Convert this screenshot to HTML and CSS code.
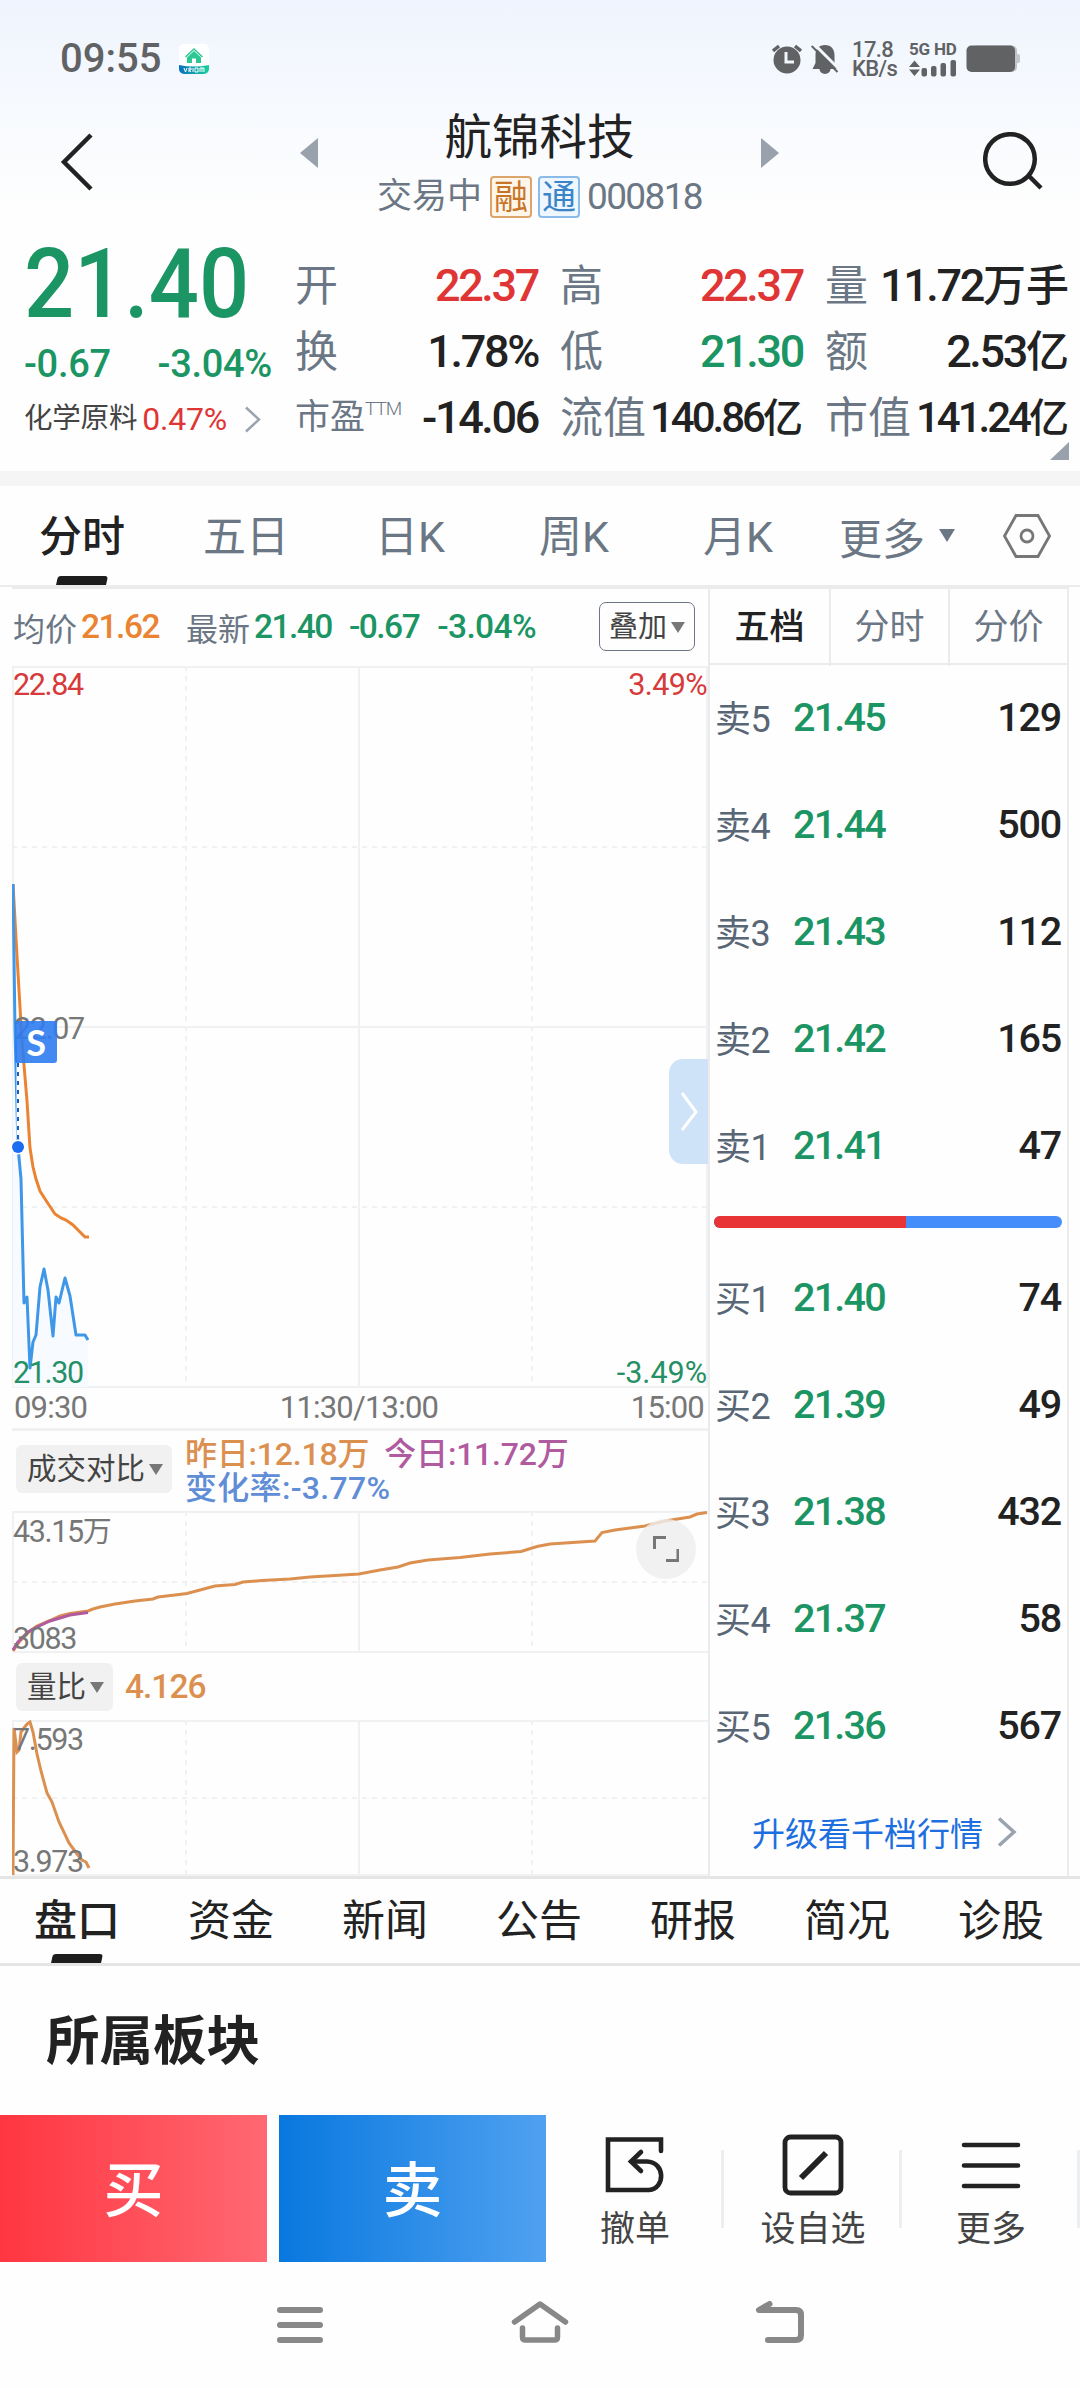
FILE: index.html
```html
<!DOCTYPE html>
<html lang="zh-CN">
<head>
<meta charset="utf-8">
<title>航锦科技 000818</title>
<link rel="stylesheet" href="styles.css">
</head>
<body>
<div class="app">
  <header class="head">
    <div class="status">
      <span class="clock">09:55</span>
      <svg class="appicon" width="30" height="30" viewBox="0 0 30 30">
        <defs><linearGradient id="ag" x1="0" x2="1"><stop offset="0" stop-color="#0a6fc0"/><stop offset="1" stop-color="#15d39a"/></linearGradient></defs>
        <rect width="30" height="30" rx="5" fill="#fff"/>
        <path d="M0 21Q15 24 30 21V25a5 5 0 0 1-5 5H5a5 5 0 0 1-5-5z" fill="url(#ag)"/>
        <path d="M6.500 13L15 5l8.500 8" fill="none" stroke="#2bc795" stroke-width="1.500"/>
        <path d="M15 7l7 6.500V19h-5v-4.500h-4V19H8v-5.500z" fill="#2bc795"/>
        <path d="M5 24l1.500 4L8 24M10 28v-4h2v2h-2l2 2M14 24v4M16 24h3v4h-3zM21 28v-4h4v4M23 24v4" fill="none" stroke="#fff" stroke-width="1"/>
      </svg>
      <span class="grow"></span>
      <svg class="alarm" width="30" height="30" viewBox="0 0 30 30"><circle cx="15" cy="16" r="13.500" fill="#616264"/><path d="M1 7l6-5M29 7l-6-5" stroke="#616264" stroke-width="3.500"/><path d="M14 8v10h8" fill="none" stroke="#f2f6fd" stroke-width="3"/></svg>
      <svg class="bell" width="28" height="31" viewBox="0 0 28 31"><path d="M14 1C8 1 4.500 5 4.500 11v8L1.500 25h7a5.500 5 0 0 0 11 0h6l-2-5V11C23.500 5 20 1 14 1z" fill="#616264"/><path d="M2.500-.5L29.500 26.500" stroke="#f3f7fe" stroke-width="3"/><path d="M.7 2L26.500 28" stroke="#616264" stroke-width="2"/></svg>
      <div class="speed"><span>17.8</span><span>KB/s</span></div>
      <div class="net">
        <span>5G HD</span>
        <svg width="48" height="17" viewBox="0 0 48 17" fill="#616264"><path d="M0 7L5.500.5L11 7zM0 9.500h11L5.500 16z"/><rect x="12.500" y="8" width="5.500" height="8.500" rx="2"/><rect x="22" y="6" width="5.500" height="10.500" rx="2"/><rect x="31.500" y="3" width="5.500" height="13.500" rx="2"/><rect x="41.500" y="0" width="5.500" height="16.500" rx="2"/></svg>
      </div>
      <svg class="batt" width="54" height="28" viewBox="0 0 54 28"><rect x="6" y=".5" width="45" height="26.500" rx="5" fill="#bfc1c6"/><rect x="49" y="9" width="5" height="9" rx="2" fill="#c3c5ca"/><rect x=".5" y=".5" width="48.500" height="26.500" rx="5" fill="#616264"/></svg>
    </div>
    <div class="titlebar">
      <svg class="back" width="34" height="58" viewBox="0 0 34 58"><path d="M31 2L4 29l27 27" fill="none" stroke="#222" stroke-width="4.500"/></svg>
      <svg class="tri" width="18" height="30" viewBox="0 0 18 30"><path d="M18 0v30L0 15z" fill="#98a1ac"/></svg>
      <div class="title">
        <div class="name">航锦科技</div>
        <div class="sub"><span>交易中</span><i class="tag rong">融</i><i class="tag tong">通</i><span class="code n">000818</span></div>
      </div>
      <svg class="tri" width="18" height="30" viewBox="0 0 18 30"><path d="M0 0v30l18-15z" fill="#98a1ac"/></svg>
      <svg class="search" width="60" height="60" viewBox="0 0 60 60"><circle cx="27" cy="27" r="24.800" fill="none" stroke="#222" stroke-width="4.500"/><path d="M45 43l13 13" stroke="#222" stroke-width="4.500"/></svg>
    </div>
  </header>

  <section class="quote">
    <div class="now">
      <div class="price">21.40</div>
      <div class="chg"><span>-0.67</span><span>-3.04%</span></div>
      <div class="ind"><span class="indname">化学原料</span><span class="up">0.47%</span><svg width="18" height="27" viewBox="0 0 18 27"><path d="M2 1.500L15 13.500L2 25.500" fill="none" stroke="#9aa3ae" stroke-width="2.500"/></svg></div>
    </div>
    <div class="stats">
      <div class="st"><span>开</span><b class="up n">22.37</b></div>
      <div class="st"><span>高</span><b class="up n">22.37</b></div>
      <div class="st"><span>量</span><b class="n">11.72<em>万手</em></b></div>
      <div class="st"><span>换</span><b class="n">1.78%</b></div>
      <div class="st"><span>低</span><b class="down n">21.30</b></div>
      <div class="st"><span>额</span><b class="n">2.53<em>亿</em></b></div>
      <div class="st"><span class="pe">市盈<sup>TTM</sup></span><b class="n">-14.06</b></div>
      <div class="st"><span>流值</span><b class="n tight">140.86<em>亿</em></b></div>
      <div class="st"><span>市值</span><b class="n tight">141.24<em>亿</em></b></div>
    </div>
    <i class="corner"></i>
  </section>

  <nav class="periods">
    <span class="p on">分时<i class="bar"></i></span><span class="p">五日</span><span class="p">日K</span><span class="p">周K</span><span class="p">月K</span>
    <span class="more">更多<i class="caret big"></i></span>
    <svg class="hex" width="48" height="44" viewBox="0 0 48 44" fill="none" stroke="#777" stroke-width="2.800"><path d="M13 1.500h22L46.500 22L35 42.500H13L1.500 22z"/><circle cx="24" cy="22" r="6"/></svg>
  </nav>

  <main class="board">
    <div class="charts">
      <div class="info">
        <span class="lab">均价</span><span class="n avg">21.62</span>
        <span class="lab new">最新</span><span class="n dn">21.40</span><span class="n dn i2">-0.67</span><span class="n dn i3">-3.04%</span>
        <button class="overlay">叠加<i class="caret"></i></button>
      </div>
      <div class="plot main">
        <svg width="696" height="722" viewBox="0 0 696 722">
          <g fill="none" stroke="#f0f1f2" stroke-width="2"><path d="M0 1h696M0 361h696M0 721h696M1 0v722M347 0v722M695 0v722"/><path d="M0 181h696M0 541h696" stroke-dasharray="5 5"/><path d="M174 0v722M520 0v722" stroke-dasharray="5 5"/></g>
          <path d="M1 218L3 364L6 481L9 513L12 637L15 631L18 702L21 676L24 669L28 621L32 603L36 624L41 670L44 631L47 637L53 612L58 630L64 669H73L76 674V721H1z" fill="#f7faff"/>
          <path d="M1 218L5 290L10 375L15 435L18 482L21 501L24 513L28 525L35 536L43 548L49 552L54 554L61 559L66 564L73 571H77" fill="none" stroke="#ea8432" stroke-width="3"/>
          <path d="M1 218L3 364L6 481L9 513L12 637L15 631L18 702L21 676L24 669L28 621L32 603L36 624L41 670L44 631L47 637L53 612L58 630L64 669H73L76 674" fill="none" stroke="#3f97e8" stroke-width="3" stroke-linejoin="round"/>
          <path d="M6 397v76" stroke="#fff" stroke-width="3"/><path d="M6 397v76" stroke="#1a5fb8" stroke-width="2" stroke-dasharray="4 5"/>
          <circle cx="6" cy="481" r="7.500" fill="#fff"/><circle cx="6" cy="481" r="6" fill="#1a6cf0"/>
        </svg>
        <span class="t tl red n">22.84</span><span class="t tr red">3.49%</span>
        <span class="t ml n">22.07</span><span class="t bl grn n">21.30</span><span class="t br grn">-3.49%</span>
        <span class="sell">S</span>
        <span class="handle"><svg width="20" height="40" viewBox="0 0 20 40"><path d="M2 1l14 19L2 38" fill="none" stroke="#fff" stroke-width="3"/></svg></span>
      </div>
      <div class="axis n"><span>09:30</span><span>11:30/13:00</span><span>15:00</span></div>
      <div class="cmp">
        <button class="pill">成交对比<i class="caret"></i></button>
        <div class="cmptext"><span class="c1">昨日:12.18万</span><span class="c2">今日:11.72万</span><br><span class="c3">变化率:-3.77%</span></div>
      </div>
      <div class="plot vol">
        <svg width="696" height="142" viewBox="0 0 696 142">
          <g fill="none" stroke="#f0f1f2" stroke-width="2"><path d="M0 1h696M0 141h696M1 0v142M347 0v142"/><path d="M0 71h696M174 0v142M520 0v142" stroke-dasharray="5 5"/></g>
          <path d="M1 140L8 130L18 120L25 115L38 109.500L48 105L58 102.500L76 100L81 98L88 96L103 93L123 90L141 88L146 86L163 84L175 82.500L188 79L203 75L223 73.500L231 71L250 69.500L278 68L298 66L323 64.500L347 63L368 59L386 56L398 52L416 49L448 46.500L478 43L509 40.500L525 35.500L538 33L583 30L590 21.500L603 19L633 15L653 10L678 6L685 3L695 1.500" fill="none" stroke="#dc9050" stroke-width="3"/>
          <path d="M1 139L6 131L16 121L25 116L38 110L58 104L76 101.500" fill="none" stroke="#b05aa0" stroke-width="3"/>
        </svg>
        <span class="t v1 n">43.15<em>万</em></span><span class="t v2 n">3083</span>
        <span class="expand"><svg width="26" height="26" viewBox="0 0 26 26"><path d="M1.500 13V1.500H13M25 13v11.500H13" fill="none" stroke="#777" stroke-width="3"/></svg></span>
      </div>
      <div class="ratio"><button class="pill">量比<i class="caret"></i></button><span class="n rv">4.126</span></div>
      <div class="plot lb">
        <svg width="696" height="156" viewBox="0 0 696 156">
          <g fill="none" stroke="#f0f1f2" stroke-width="2"><path d="M0 1h696M0 155h696M1 0v156M347 0v156"/><path d="M0 78h696M174 0v156M520 0v156" stroke-dasharray="5 5"/></g>
          <path d="M1 155L2 8L5 32L7 30L9 12L12 8L15 4L18 2L21 12L25 34L29 51L35 73L40 82L47 102L57 123L65 134L70 140L74 142L77 148" fill="none" stroke="#dc9050" stroke-width="3"/>
        </svg>
        <span class="t r1 n">7.593</span><span class="t r2 n">3.973</span>
      </div>
    </div>

    <aside class="book">
      <div class="btabs"><span class="on">五档</span><span>分时</span><span>分价</span></div>
      <div class="row"><span>卖5</span><b class="n">21.45</b><b class="q">129</b></div>
      <div class="row"><span>卖4</span><b class="n">21.44</b><b class="q">500</b></div>
      <div class="row"><span>卖3</span><b class="n">21.43</b><b class="q">112</b></div>
      <div class="row"><span>卖2</span><b class="n">21.42</b><b class="q">165</b></div>
      <div class="row"><span>卖1</span><b class="n">21.41</b><b class="q">47</b></div>
      <div class="balance"><i style="width:55.2%"></i></div>
      <div class="row"><span>买1</span><b class="n">21.40</b><b class="q">74</b></div>
      <div class="row"><span>买2</span><b class="n">21.39</b><b class="q">49</b></div>
      <div class="row"><span>买3</span><b class="n">21.38</b><b class="q">432</b></div>
      <div class="row"><span>买4</span><b class="n">21.37</b><b class="q">58</b></div>
      <div class="row"><span>买5</span><b class="n">21.36</b><b class="q">567</b></div>
      <div class="link">升级看千档行情<svg width="20" height="30" viewBox="0 0 20 30"><path d="M2 1.500L17 15L2 28.500" fill="none" stroke="#9aa3ae" stroke-width="3.500"/></svg></div>
    </aside>
  </main>

  <nav class="sections"><span class="on">盘口<i class="bar"></i></span><span>资金</span><span>新闻</span><span>公告</span><span>研报</span><span>简况</span><span>诊股</span></nav>
  <h2 class="block">所属板块</h2>

  <footer class="actions">
    <button class="trade buy">买</button>
    <button class="trade sellbtn">卖</button>
    <div class="act"><svg width="62" height="62" viewBox="0 0 62 62" fill="none" stroke="#222" stroke-width="4.600"><path d="M57 17V5.500H4V56H45C62 54 61 28 43 27.500H28" stroke-linecap="round"/><path d="M37 18L27 27.500L37 37" stroke-linecap="round"/></svg><span>撤单</span></div>
    <div class="act"><svg width="62" height="62" viewBox="0 0 62 62" fill="none" stroke="#222"><rect x="3" y="3" width="56" height="56" rx="5.500" stroke-width="4.800"/><path d="M19 44L44 19" stroke-width="6"/></svg><span>设自选</span></div>
    <div class="act"><svg width="62" height="62" viewBox="0 0 62 62" fill="none" stroke="#222" stroke-width="4.600" stroke-linecap="round"><path d="M4 11h54M4 31.500h54M4 52h54"/></svg><span>更多</span></div>
  </footer>
  <div class="sysnav">
    <svg width="60" height="46" viewBox="0 0 60 46"><path d="M10 10h40M10 25h40M10 40h40" stroke="#888" stroke-width="6" stroke-linecap="round"/></svg>
    <svg width="60" height="46" viewBox="0 0 60 46" fill="none" stroke="#888" stroke-width="5.500" stroke-linecap="round" stroke-linejoin="round"><path d="M4.500 22L30 4L55.500 22M12.500 28v9q0 3 3 3h29q3 0 3-3v-9"/></svg>
    <svg width="60" height="46" viewBox="0 0 60 46" fill="none" stroke="#888" stroke-width="6" stroke-linecap="round" stroke-linejoin="round"><path d="M19.500 4L9 10H46q5 0 5 5v20q0 5-5 5H18"/></svg>
  </div>
</div>
</body>
</html>
```
FILE: styles.css
```css
* { box-sizing: border-box; }
body { margin: 0; background: #fff; }
i, em { font-style: normal; }
b { font-weight: 500; }
svg { display: block; flex: none; }
button { border: 0; margin: 0; padding: 0; background: none; font: inherit; color: inherit; }
.app {
  width: 1080px; height: 2388px; overflow: hidden;
  display: flex; flex-direction: column;
  font-family: Roboto, "Noto Sans CJK SC", sans-serif; color: #222; background: #fefefe;
}
.n { letter-spacing: -.045em; }
.n em { letter-spacing: 0; }
.up { color: #e03535; }
.down { color: #1a9563; }
.grow { flex: 1; }

/* status bar and title */
.head { height: 235px; background: linear-gradient(#eff5fe, #fefefe 210px); }
.status { height: 118px; display: flex; align-items: center; padding: 0 60px 0 60px; color: #616264; }
.clock { font-size: 40px; font-weight: 500; line-height: 40px; width: 119px; }
.alarm { margin-right: 9px; }
.bell { margin-right: 13px; }
.speed { width: 57px; display: flex; flex-direction: column; font-size: 22px; line-height: 19.500px; font-weight: 500; letter-spacing: -.6px; }
.net { width: 57px; display: flex; flex-direction: column; gap: 3px; font-size: 17px; line-height: 15px; font-weight: 700; letter-spacing: -.2px; white-space: nowrap; }
.titlebar { display: flex; align-items: flex-start; padding: 0 37px 0 60px; }
.back { margin-top: 15px; }
.tri { margin-top: 20px; }
.back + .tri { margin-left: 206px; }
.title { width: 444px; display: flex; flex-direction: column; align-items: center; }
.name { font-size: 47.500px; line-height: 48px; margin-top: -4px; }
.sub { display: flex; align-items: center; height: 44px; margin-top: 13px; font-size: 35px; line-height: 42px; color: #6b7785; }
.tag { width: 42px; height: 42px; border: 2px solid; border-radius: 4px; font-size: 34px; line-height: 38px; text-align: center; margin-left: 6px; }
.rong { color: #c8752a; border-color: #dda46c; background: #fff6ea; margin-left: 8px; }
.tong { color: #3c84c8; border-color: #8bbbe8; background: #eef6ff; }
.code { font-size: 37px; margin-left: 7px; }
.search { margin: 14px 0 0 204px; }

/* quote */
.quote { height: 251px; display: flex; position: relative; border-bottom: 15px solid #f5f5f5; }
.now { width: 295px; padding-left: 24px; color: #1a9563; }
.price { font-size: 97px; font-weight: 500; line-height: 98px; transform: scaleX(.91); transform-origin: left; }
.chg { display: flex; justify-content: space-between; width: 248px; font-size: 38px; line-height: 40px; font-weight: 500; margin-top: 11px; letter-spacing: -.3px; }
.ind { display: flex; align-items: center; margin-top: 16px; font-size: 32px; line-height: 38px; letter-spacing: -.2px; }
.indname { font-size: 28.500px; color: #444; margin-right: 5px; }
.ind svg { margin-left: 17px; }
.stats { display: grid; grid-template-columns: 243px 243px 244px; column-gap: 22px; grid-auto-rows: 66px; padding-top: 18px; }
.st { display: flex; justify-content: space-between; line-height: 66px; font-size: 43px; color: #6b7785; white-space: nowrap; }
.st b { font-size: 45px; color: #222; letter-spacing: -.052em; }
.st b em { font-size: 43px; letter-spacing: 0; }
.st .tight { font-size: 42px; letter-spacing: -3px; }
.st .tight em { font-size: 40px; }
.st .up { color: #e03535; }
.st .down { color: #1a9563; }
.st .pe { font-size: 35px; }
.pe sup { font-size: 19px; font-weight: 300; vertical-align: 14px; line-height: 0; letter-spacing: -1px; }
.corner { position: absolute; right: 11px; bottom: 11px; border-bottom: 18px solid #98a1ac; border-left: 19px solid transparent; }

/* period tabs */
.periods { height: 101px; display: flex; align-items: center; border-bottom: 2px solid #ebebeb; font-size: 43px; color: #6b7785; }
.p { width: 164px; height: 99px; line-height: 103px; text-align: center; position: relative; }
.on { color: #222; font-weight: 500; }
.bar { position: absolute; left: 50%; bottom: 0; width: 50px; height: 9px; margin-left: -25px; background: #1d1d1d; border-radius: 3px 3px 0 0; transform: skewX(-12deg); }
.more { display: flex; align-items: center; margin-left: 19px; width: 164px; }
.caret { display: inline-block; border: 7px solid transparent; border-top: 11px solid #777; border-bottom: 0; margin-left: 4px; vertical-align: 4px; }
.caret.big { border-width: 13px 8px 0; border-top-color: #6b7785; margin-left: 14px; }

/* charts */
.board { display: flex; padding: 0 11px 0 12px; height: 1289px; }
.charts { width: 696px; }
.info { height: 79px; display: flex; align-items: center; padding: 0 0 2px 1px; font-size: 33.500px; border-top: 2px solid #ebebeb; white-space: nowrap; }
.info .n { font-weight: 500; }
.lab { font-size: 32px; color: #6b7785; margin-right: 4px; }
.new { margin-left: 27px; }
.avg { color: #ea8432; }
.dn { color: #1a9563; }
.i2 { margin-left: 17px; }
.info .i3 { margin-left: 18px; letter-spacing: -.6px; }
.overlay { margin-left: auto; margin-right: 13px; width: 96px; height: 49px; border: 1.500px solid #6b7785; border-radius: 7px; font-size: 29px; line-height: 40px; color: #444; }
.plot { position: relative; }
.t { position: absolute; font-size: 30.500px; line-height: 32px; color: #777; }
.red { color: #d63a3a; }
.grn { color: #259066; }
.tl { left: 1px; top: 3px; } .tr { right: 1px; top: 3px; letter-spacing: -.6px; }
.ml { left: 2px; top: 347px; } .bl { left: 1px; bottom: -1px; } .br { right: 1px; bottom: -1px; }
.sell { position: absolute; left: 3px; top: 355px; width: 42px; height: 42px; border-radius: 3px; background: rgba(47, 124, 241, .9); color: #fff; font: 700 36px/42px Lato, sans-serif; text-align: center; }
.handle { position: absolute; right: 0; top: 393px; width: 39px; height: 105px; background: #cfe3f8; border-radius: 14px 0 0 14px; padding: 33px 0 0 11px; }
.axis { height: 43px; display: flex; justify-content: space-between; padding: 0 4px 0 2px; font-size: 31px; line-height: 39px; color: #777; border-bottom: 3px solid #f0f1f2; }
.n.axis { letter-spacing: -.8px; }
.cmp { height: 80px; display: flex; padding: 14px 0 0 4px; }
.pill { height: 48px; padding: 0 9px 0 11px; border-radius: 6px; background: #f1f1f1; color: #444; font-size: 29.500px; line-height: 48px; white-space: nowrap; flex: none; }
.cmptext { margin: -8px 0 0 13px; font-size: 32px; line-height: 34px; font-weight: 500; white-space: nowrap; letter-spacing: -.2px; }
.c1 { color: #dc9050; } .c2 { color: #b05aa0; margin-left: 15px; } .c3 { color: #5f8dd6; letter-spacing: .3px; }
.v1 { left: 1px; top: 5px; } .v2 { left: 1px; bottom: -2px; }
.v1 em { font-size: 29px; }
.expand { position: absolute; right: 12px; top: 8px; width: 60px; height: 60px; border-radius: 50%; background: rgba(238, 238, 238, .82); padding: 17px; }
.ratio { height: 67px; display: flex; align-items: center; padding-left: 4px; }
.rv { margin-left: 12px; font-size: 33.500px; font-weight: 500; color: #dc9050; }
.ratio .rv { letter-spacing: -1px; }
.r1 { left: 1px; top: 4px; } .r2 { left: 1px; bottom: -2px; }

/* order book */
.book { width: 361px; border: 2px solid #ebebeb; border-bottom: 0; }
.btabs { display: grid; grid-template-columns: repeat(3, 1fr); height: 76px; border-bottom: 2px solid #ebebeb; font-size: 35px; line-height: 77px; text-align: center; color: #6b7785; }
.btabs span + span { border-left: 2px solid #ebebeb; }
.btabs .on { color: #222; }
.row { height: 107px; display: flex; align-items: center; padding: 0 6px 3px 5px; font-size: 39.500px; }
.row span { width: 78px; font-size: 36px; color: #586675; margin-top: -3px; letter-spacing: -.5px; }
.row b { color: #1a9563; }
.row .q { margin-left: auto; color: #222; letter-spacing: -1.200px; }
.balance { margin: 16px 5px 17px 4px; height: 12px; border-radius: 6px; background: #468dfc; overflow: hidden; }
.balance i { display: block; height: 12px; background: #e83434; }
.link { display: flex; align-items: center; gap: 14px; height: 103px; padding-left: 42px; font-size: 33px; color: #1d6fe0; }

/* lower part */
.sections { flex: none; display: flex; height: 90px; border-top: 3px solid #e5e5e5; border-bottom: 3px solid #e5e5e5; font-size: 43px; line-height: 84px; }
.sections span { width: 154px; text-align: center; position: relative; }
.block { margin: 0; height: 149px; padding-left: 46px; font-size: 53.500px; line-height: 152px; font-weight: 700; flex: none; }
.actions { flex: none; display: flex; height: 147px; }
.trade { width: 267px; font-size: 60px; line-height: 154px; font-weight: 500; color: #fff; margin-right: 12px; }
.buy { background: linear-gradient(90deg, #ff3641, #ff6872); }
.sellbtn { background: linear-gradient(90deg, #0878df, #50a1f0); margin-right: 0; }
.act { width: 178px; display: flex; flex-direction: column; align-items: center; padding-top: 19px; position: relative; font-size: 35px; line-height: 40px; color: #444; }
.act span { margin-top: 14px; }
.act::after { content: ""; position: absolute; right: 0; top: 35px; width: 3px; height: 78px; background: #eceeef; }
.sysnav { display: flex; justify-content: center; gap: 180px; padding-top: 38px; }
```
